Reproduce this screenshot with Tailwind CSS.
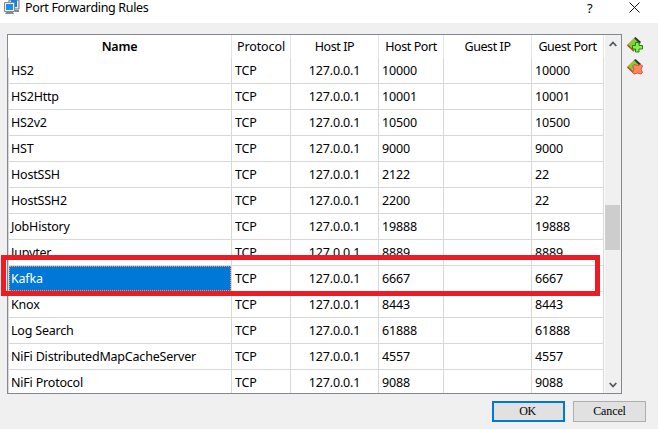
<!DOCTYPE html>
<html lang="en">
<head>
<meta charset="utf-8">
<title>Port Forwarding Rules</title>
<script src="https://cdn.jsdelivr.net/npm/@tailwindcss/browser@4"></script>
</head>
<body class="w-[658px] h-[429px] overflow-hidden bg-[#f0f0f0] font-['Noto_Sans','Open_Sans',sans-serif] text-[12.5px] text-black">
<main class="relative w-[658px] h-[429px] flex flex-col">
  <header class="h-[23px] bg-white flex items-start shrink-0">
    <svg class="ml-1 w-4 h-[15px] shrink-0" viewBox="0 0 16 15">
      <path d="M5 0h10v9H5z" fill="#e8e8e8" stroke="#777"/><path d="M7 0h6v7H7z" fill="#1583dc"/><path d="M11 10h4v2h-4z" fill="#888"/>
      <path d="M.5 2.5h10v9H.5z" fill="#eee" stroke="#888"/><path d="M2 4h7v6H2z" fill="#1a91ea"/><path d="M2 12h7l1 2H1z" fill="#8a8a8a"/>
    </svg>
    <h1 class="ml-[5px] leading-4 w-[440px] whitespace-nowrap tracking-[-0.33px]">Port Forwarding Rules</h1>
    <span class="ml-[122px] w-[8px] leading-4 text-[13px]">?</span>
    <svg class="ml-[34px] mt-[2px] w-[11px] h-[11px]" viewBox="0 0 11 11"><path d="M.5.5l10 10M10.500.5l-10 10" stroke="#111" fill="none"/></svg>
  </header>
  <div class="flex mt-[11px] ml-[7px]">
    <section class="w-[615px] h-[360px] border border-[#828790] bg-white flex overflow-hidden shrink-0">
      <div class="w-[596px]">
        <div class="h-[23px] leading-[23px] grid grid-cols-[224px_59px_88px_65px_88px_72px] text-center whitespace-nowrap tracking-[-0.42px]">
          <div class="border-r border-[#e5e5e5] font-semibold tracking-[-0.2px]">Name</div>
          <div class="border-r border-[#e5e5e5] tracking-[-0.1px]">Protocol</div>
          <div class="border-r border-[#e5e5e5]">Host IP</div>
          <div class="border-r border-[#e5e5e5]">Host Port</div>
          <div class="border-r border-[#e5e5e5]">Guest IP</div>
          <div class="border-r border-[#e5e5e5]">Guest Port</div>
        </div>
        <div id="rows" class="border-l border-[#d8d8d8]"></div>
      </div>
      <div class="ml-px w-4 bg-[#f0f0f0] flex flex-col items-center shrink-0">
        <svg class="mt-[6px] w-2 h-[6px]" viewBox="0 0 8 6"><path d="M.7 5L4 1.500 7.300 5" fill="none" stroke="#555" stroke-width="1.800"/></svg>
        <div class="mt-[158px] w-[15px] h-[45px] bg-[#cdcdcd] self-start"></div>
        <svg class="mt-[132px] w-2 h-[6px]" viewBox="0 0 8 6"><path d="M.7 1L4 4.500 7.300 1" fill="none" stroke="#555" stroke-width="1.800"/></svg>
      </div>
    </section>
    <div class="ml-[5px] mt-[3px] flex flex-col gap-[6px]">
      <svg class="w-4 h-4" viewBox="0 0 16 16">
        <path d="M7.500 1L.5 8l6.500 6 6-6z" fill="#79d331"/>
        <path d="M7.500 1L.5 8" fill="none" stroke="#e08a45"/>
        <path d="M.5 8L7 14.300" fill="none" stroke="#c33d22" stroke-width="1.500"/>
        <path d="M7 1L8.500 0l5.500 5-1.500 2z" fill="#333"/>
        <path d="M8.500 5.500h3.500v3h3.500v3.500H12v3H8.500v-3H5.500V8.500h3z" fill="#85ee55" stroke="#25820f"/>
      </svg>
      <svg class="w-4 h-4" viewBox="0 0 16 16">
        <path d="M7.500 1L.5 8l6.500 6 6-6z" fill="#79d331"/>
        <path d="M7.500 1L.5 8" fill="none" stroke="#e08a45"/>
        <path d="M.5 8L7 14.300" fill="none" stroke="#c33d22" stroke-width="1.500"/>
        <path d="M7 1L8.500 0l5.500 5-1.500 2z" fill="#333"/>
        <path d="M7 5.500l3.500 1 3.500-1 1.500 1.500-1.500 3.300 1.500 3.200-1.500 1.500-3.500-1-3.500 1-1.500-1.500L7 10.300 5.500 7z" fill="#ff8563" stroke="#e0502c"/>
      </svg>
    </div>
  </div>
  <footer class="flex gap-2 ml-[492px] mt-[7px] font-['Liberation_Serif',serif] text-[12px]">
    <button class="w-[73px] h-[21px] bg-[#e1e1e1] border-2 border-[#0078d7] leading-[17px] pr-[2px] tracking-[-0.3px]">OK</button>
    <button class="w-[73px] h-[21px] bg-[#e1e1e1] border border-[#adadad] leading-[19px] tracking-[-0.1px]">Cancel</button>
  </footer>
  <div class="absolute left-[1px] top-[255px] w-[599px] h-[41px] border-[5px] border-[#ed1c24]"></div>
</main>
<script>
const rules = [
  ["HS2", "10000", "10000"], ["HS2Http", "10001", "10001"], ["HS2v2", "10500", "10500"],
  ["HST", "9000", "9000"], ["HostSSH", "2122", "22"], ["HostSSH2", "2200", "22"],
  ["JobHistory", "19888", "19888"], ["Jupyter", "8889", "8889"], ["Kafka", "6667", "6667"],
  ["Knox", "8443", "8443"], ["Log Search", "61888", "61888"],
  ["NiFi DistributedMapCacheServer", "4557", "4557"], ["NiFi Protocol", "9088", "9088"]
];
document.getElementById("rows").innerHTML = rules.map(([name, host, guest]) => `
  <div class="h-[26px] leading-[25px] grid grid-cols-[223px_59px_88px_65px_88px_72px] whitespace-nowrap tracking-[-0.15px]">
    <div class="border-r border-b border-[#d8d8d8] tracking-[-0.2px]"><div class="h-[25px] ${name === "Kafka" ? "bg-[#0078d7] text-white outline-1 outline-dotted outline-[#ff9a3c] -outline-offset-1" : ""} pl-[2px]">${name}</div></div>
    <div class="border-r border-b border-[#d8d8d8] pl-[3px]">TCP</div>
    <div class="border-r border-b border-[#d8d8d8] text-center">127.0.0.1</div>
    <div class="border-r border-b border-[#d8d8d8] pl-[3px]">${host}</div>
    <div class="border-r border-b border-[#d8d8d8]"></div>
    <div class="border-r border-b border-[#d8d8d8] pl-[3px]">${guest}</div>
  </div>`).join("");
</script>
</body>
</html>
